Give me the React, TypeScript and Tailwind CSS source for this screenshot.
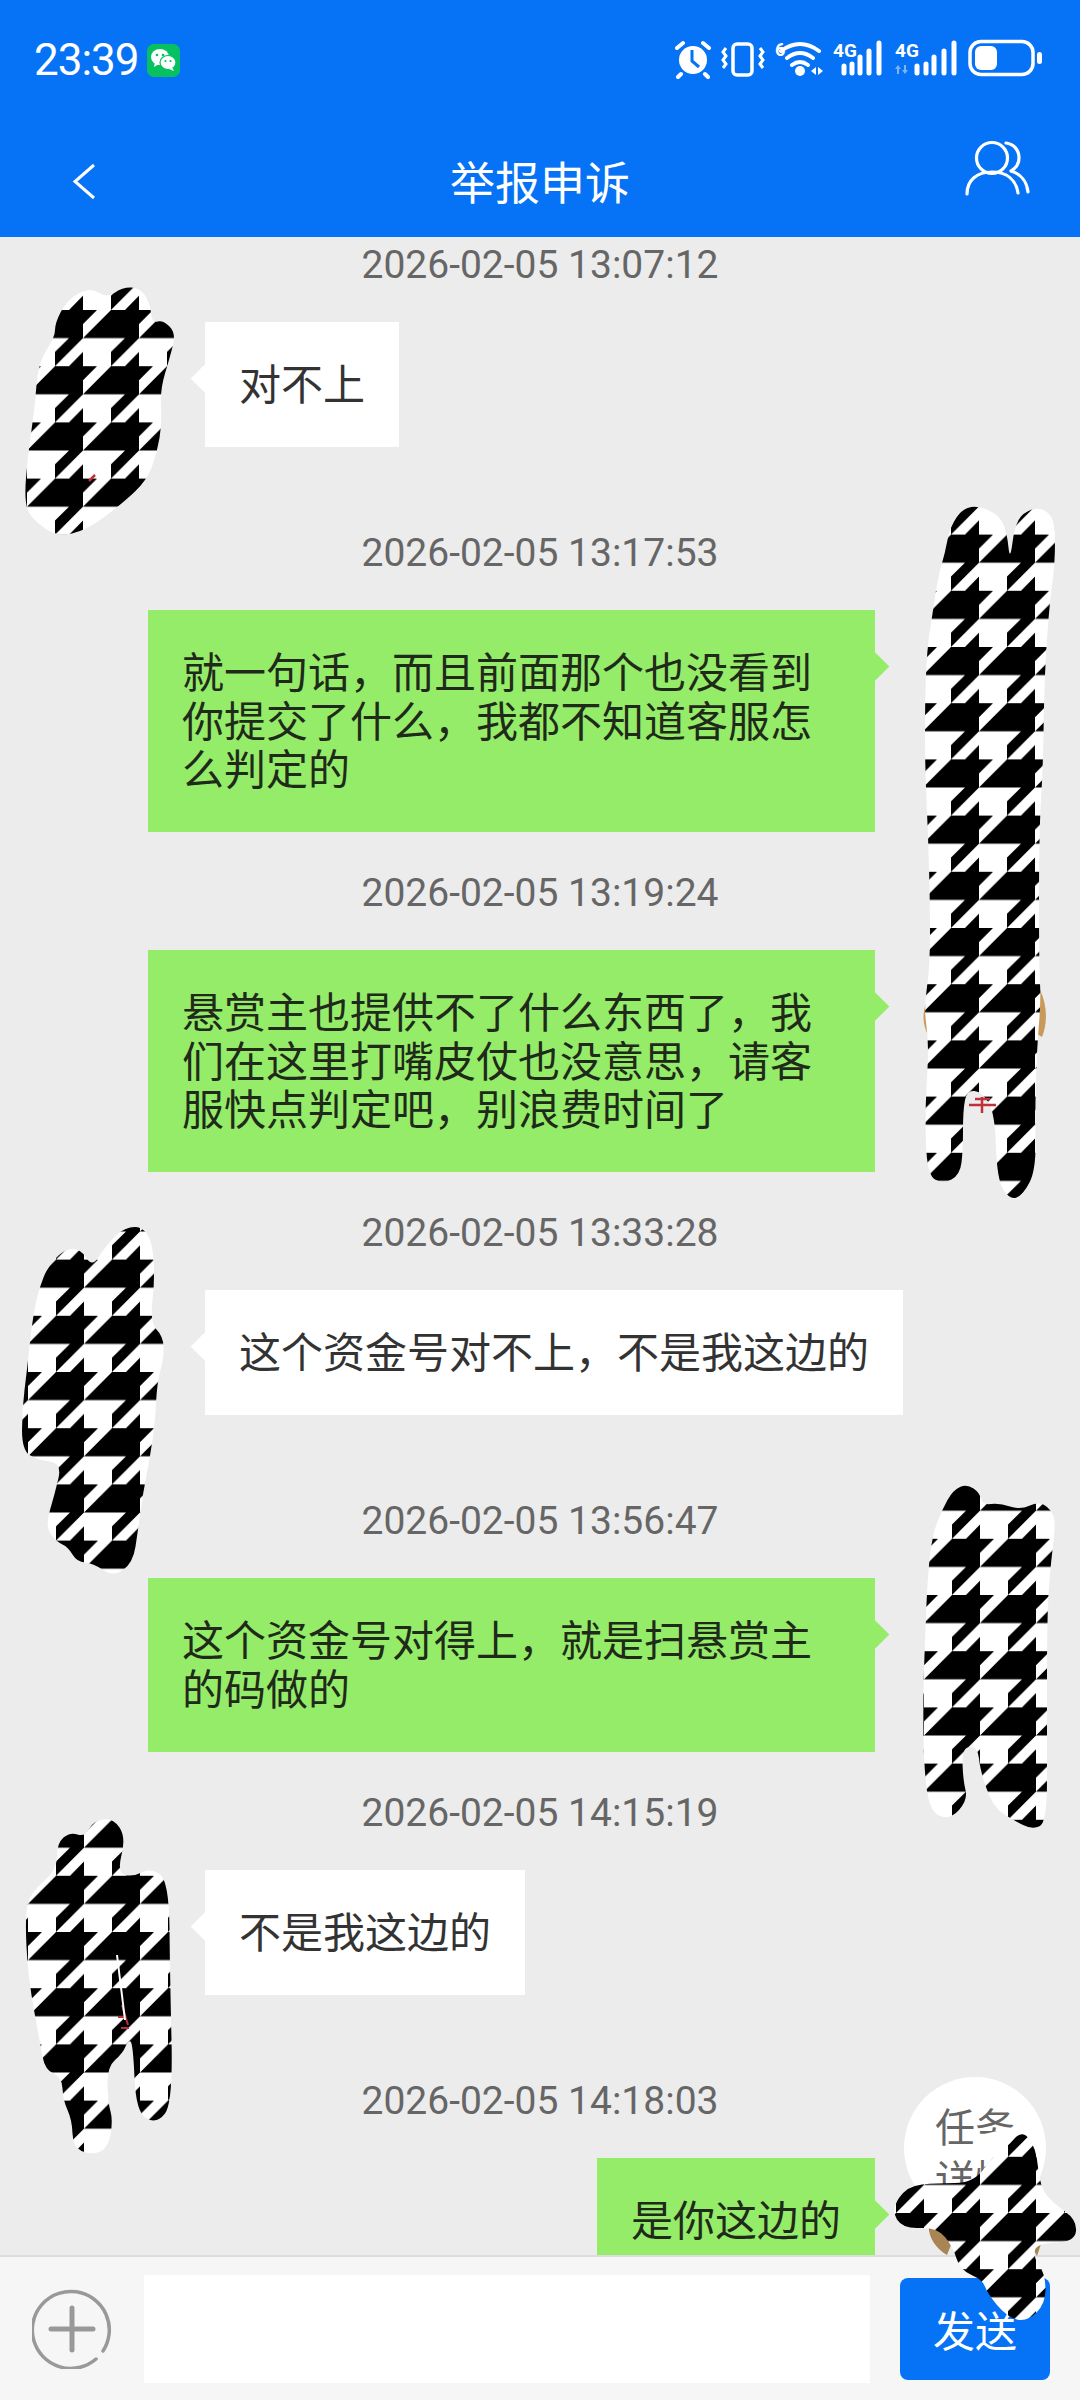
const cjk = "font-['Noto_Sans_CJK_SC','Noto_Sans',sans-serif]";

type Msg = { time: string; text: string; me: boolean };

const messages: Msg[] = [
  { time: "2026-02-05 13:07:12", text: "对不上", me: false },
  { time: "2026-02-05 13:17:53", text: "就一句话，而且前面那个也没看到你提交了什么，我都不知道客服怎么判定的", me: true },
  { time: "2026-02-05 13:19:24", text: "悬赏主也提供不了什么东西了，我们在这里打嘴皮仗也没意思，请客服快点判定吧，别浪费时间了", me: true },
  { time: "2026-02-05 13:33:28", text: "这个资金号对不上，不是我这边的", me: false },
  { time: "2026-02-05 13:56:47", text: "这个资金号对得上，就是扫悬赏主的码做的", me: true },
  { time: "2026-02-05 14:15:19", text: "不是我这边的", me: false },
  { time: "2026-02-05 14:18:03", text: "是你这边的", me: true },
];

// redaction scribbles over the avatars: outline points + where the check pattern starts
const blobs: { id: string; x: number; y: number; pts: number[][] }[] = [
  {
    id: "a", x: 55, y: 310,
    pts: [[55,323],[67,300],[90,287],[107,298],[123,287],[140,288],[150,303],[152,323],[163,320],[176,333],[170,357],[160,390],[162,423],[157,453],[147,480],[123,503],[87,530],[57,537],[33,520],[24,503],[28,453],[35,407],[38,363],[55,337]],
  },
  {
    id: "b", x: 951, y: 647,
    pts: [[950,527],[963,508],[980,506],[1000,516],[1007,533],[1010,562],[1015,523],[1027,510],[1043,508],[1055,520],[1055,563],[1050,600],[1046,650],[1044,700],[1043,767],[1039,833],[1039,967],[1041,1000],[1037,1047],[1035,1113],[1036,1170],[1023,1195],[1010,1200],[997,1180],[995,1113],[982,1092],[967,1090],[963,1110],[963,1150],[960,1175],[943,1184],[927,1175],[925,1113],[928,1063],[928,1037],[924,1007],[930,967],[930,900],[928,833],[925,767],[925,700],[927,650],[932,617],[938,577],[945,553]],
  },
  {
    id: "c", x: 56, y: 1372,
    pts: [[40,1287],[47,1268],[63,1250],[80,1248],[92,1267],[103,1250],[120,1230],[140,1225],[152,1240],[155,1277],[150,1323],[163,1336],[164,1357],[157,1383],[155,1423],[150,1457],[143,1493],[138,1530],[133,1563],[113,1577],[93,1563],[77,1562],[68,1547],[57,1542],[45,1527],[55,1493],[62,1463],[37,1460],[22,1450],[22,1410],[27,1370],[32,1323],[37,1297]],
  },
  {
    id: "d", x: 952, y: 1595,
    pts: [[942,1510],[953,1490],[967,1484],[980,1493],[982,1505],[1000,1503],[1020,1510],[1040,1501],[1054,1513],[1055,1530],[1050,1570],[1047,1620],[1047,1737],[1047,1822],[1033,1830],[1013,1820],[993,1807],[980,1770],[978,1747],[962,1747],[963,1780],[968,1800],[950,1820],[930,1812],[924,1770],[923,1703],[925,1637],[928,1570],[933,1533]],
  },
  {
    id: "e", x: 56, y: 1932,
    pts: [[57,1843],[70,1832],[85,1837],[93,1821],[113,1818],[126,1837],[117,1873],[133,1877],[150,1868],[169,1880],[170,1977],[173,2103],[157,2124],[136,2113],[133,2043],[128,2040],[123,2053],[107,2067],[108,2103],[113,2120],[108,2149],[90,2155],[73,2147],[72,2120],[63,2100],[62,2077],[45,2070],[40,2043],[28,1977],[25,1917],[30,1893],[57,1870]],
  },
  {
    id: "f", x: 952, y: 2213,
    pts: [[1007,2147],[1022,2130],[1036,2147],[1040,2187],[1053,2203],[1077,2220],[1075,2242],[1037,2243],[1033,2257],[1045,2273],[1046,2303],[1027,2322],[1007,2317],[987,2293],[983,2280],[960,2270],[953,2247],[937,2227],[903,2229],[891,2210],[907,2186],[937,2183],[973,2183],[993,2157]],
  },
];

function smooth(pts: number[][]) {
  const mid = (a: number[], b: number[]) => `${(a[0] + b[0]) / 2} ${(a[1] + b[1]) / 2}`;
  let d = `M${mid(pts[pts.length - 1], pts[0])}`;
  pts.forEach((p, i) => {
    d += ` Q${p[0]} ${p[1]} ${mid(p, pts[(i + 1) % pts.length])}`;
  });
  return d + "Z";
}

function Scribbles() {
  return (
    <svg className="absolute left-0 top-0 pointer-events-none" width="1080" height="2400" viewBox="0 0 1080 2400">
      <defs>
        {blobs.map((b) => (
          <pattern key={b.id} id={`check-${b.id}`} patternUnits="userSpaceOnUse" x={b.x} y={b.y} width="56" height="56.2">
            <rect width="56" height="56.2" fill="#fff" />
            <path d="M0 0H28V28H0ZM14 56.2H28V42ZM28 0H42L28 14ZM56 0V28H28ZM14 28H28L0 56.2V42Z" fill="#000" />
          </pattern>
        ))}
      </defs>
      {/* bits of the avatars that show round the edges */}
      <path d="M926 1003c-4 12-3 22 2 32l5-2-2-30ZM1040 990c7 14 8 32 2 47l-5-3 1-44Z" fill="#c79a5a" />
      <path d="M929 2222c-2 14 6 26 18 33l8-20-12-18ZM1025 2234l12 22 6-18-8-8Z" fill="#a98454" />
      {/* white stroke that cuts the floating button's first line */}
      <path d="M976 2136L1018 2126 1030 2154H976Z" fill="#fff" />
      {blobs.map((b) => (
        <path key={b.id} d={smooth(b.pts)} fill={`url(#check-${b.id})`} />
      ))}
      <path d="M969 1105H996M982 1097V1113M975 1099H990M89 481l6-6" stroke="#c0303a" strokeWidth="2.5" fill="none" />
      <path d="M122 2005l6 20M118 2017h8M121 2028h8" stroke="#b5303a" strokeWidth="2" fill="none" />
      <path d="M117 1955l8 65" stroke="#fff" strokeWidth="2" fill="none" />
    </svg>
  );
}

function StatusIcons() {
  return (
    <svg width="372" height="40" viewBox="0 0 372 40" fill="none">
      {/* alarm */}
      <circle cx="21" cy="21" r="14" fill="#fff" />
      <path d="M20 11v11l7 6" stroke="#0672f5" strokeWidth="3" />
      <path d="M5 9l6-5M37 9l-6-5M9 35l-3 3M33 35l3 3" stroke="#fff" strokeWidth="4" strokeLinecap="round" />
      {/* vibrate */}
      <rect x="61" y="5" width="19" height="31" rx="4" stroke="#fff" strokeWidth="3.5" />
      <path d="M54 9l-3 4 3 4-3 4 3 4-3 4M88 9l3 4-3 4 3 4-3 4 3 4" stroke="#fff" strokeWidth="3" />
      {/* wifi */}
      <text x="103" y="17" fill="#fff" fontSize="18" fontWeight="700" fontFamily="Roboto, sans-serif">6</text>
      <path d="M109 12Q128-2 147 12M115 19Q128 9 141 19M120 26Q128 20 136 26" stroke="#fff" strokeWidth="4" strokeLinecap="round" />
      <circle cx="128" cy="32" r="5" fill="#fff" />
      <path d="M144 28v8l-5-4ZM146 28v8l5-4Z" fill="#fff" />
      {/* sim 1 */}
      <text x="161" y="18" fill="#fff" fontSize="19" fontWeight="700" fontFamily="Roboto, sans-serif">4G</text>
      <path d="M172 27v7M180 25v9M188 18v16M197 12v22M207 4v30" stroke="#fff" strokeWidth="5" strokeLinecap="round" />
      {/* sim 2 */}
      <text x="223" y="18" fill="#fff" fontSize="19" fontWeight="700" fontFamily="Roboto, sans-serif">4G</text>
      <path d="M226 26l-3 4h2v5h2v-5h2ZM233 35l3-4h-2v-5h-2v5h-2Z" fill="#7db4fa" />
      <path d="M245 27v7M254 25v9M262 18v16M272 12v22M282 4v30" stroke="#fff" strokeWidth="5" strokeLinecap="round" />
      {/* battery */}
      <rect x="298" y="2.5" width="63" height="33" rx="11" stroke="#fff" strokeWidth="3.5" />
      <rect x="303" y="7" width="22" height="24" rx="6" fill="#fff" />
      <rect x="365" y="13" width="5" height="12" rx="2.5" fill="#fff" />
    </svg>
  );
}

function WechatBadge() {
  return (
    <div className="w-[33px] h-[33px] rounded-[7px] bg-[#07c160] flex items-center justify-center">
      <svg width="27" height="24" viewBox="0 0 27 24" fill="#fff">
        <ellipse cx="10" cy="9" rx="9" ry="8" />
        <path d="M5 14l-1 5 5-3Z" />
        <ellipse cx="18" cy="14.5" rx="8" ry="7" stroke="#07c160" strokeWidth="1.2" />
        <path d="M22 19l2 4-5-2Z" />
        <circle cx="7" cy="7" r="1.3" fill="#07c160" />
        <circle cx="13" cy="7" r="1.3" fill="#07c160" />
        <circle cx="15.5" cy="13" r="1.1" fill="#07c160" />
        <circle cx="20.5" cy="13" r="1.1" fill="#07c160" />
      </svg>
    </div>
  );
}

function Bubble({ msg }: { msg: Msg }) {
  const colour = msg.me ? "bg-[#95ec69] text-[#1f2a1a]" : "bg-white text-[#333333]";
  return (
    <div className={`flex min-h-[170px] items-start ${msg.me ? "justify-end pr-[205px]" : "justify-start pl-[205px]"}`}>
      <div className={`relative max-w-[727px] px-[34px] pt-[36px] pb-[40.5px] text-[42px] leading-[48.5px] ${colour}`}>
        <span className={`absolute top-[46px] w-[21px] h-[21px] rotate-45 ${msg.me ? "-right-[10px] bg-[#95ec69]" : "-left-[10px] bg-white"}`} />
        <p className="relative">{msg.text}</p>
      </div>
    </div>
  );
}

export default function App() {
  return (
    <div className={`relative flex flex-col w-[1080px] h-[2400px] overflow-hidden bg-[#ececec] ${cjk}`}>
      <header className="h-[237px] bg-[#0672f5] text-white shrink-0">
        <div className="flex h-[125px] items-start justify-between pl-[34px] pr-[36px] pt-[39px]">
          <div className="flex items-center gap-[8px]">
            <span className="font-['Roboto',sans-serif] text-[44px] leading-[42px] tracking-[-1px]">23:39</span>
            <WechatBadge />
          </div>
          <StatusIcons />
        </div>
        <div className="grid grid-cols-[1fr_auto_1fr] items-center h-[112px]">
          <div className="pl-[72px]">
            <svg width="24" height="37" viewBox="0 0 24 37" fill="none">
              <path d="M22 2L3 18.5 22 35" stroke="#fff" strokeWidth="3" />
            </svg>
          </div>
          <div className="text-[45px] leading-[56px]">举报申诉</div>
          <div className="flex justify-end pr-[50px] -mt-[26px]">
            <svg width="66" height="56" viewBox="0 0 66 56" fill="none" stroke="#fff" strokeWidth="3.2" strokeLinecap="round">
              <circle cx="28" cy="18" r="15.5" />
              <path d="M3 54c0-14 10-22 25-22s24 8 26 21M42 3c8 1 13 7 13 15 0 6-3 10-8 13M47 31c10 3 16 11 17 21" />
            </svg>
          </div>
        </div>
      </header>

      <main className="flex-1 overflow-hidden">
        <div className="-mt-[33px]">
          {messages.map((m) => (
            <section key={m.time}>
              <div className="flex h-[118px] items-center justify-center pt-[5px] font-['Roboto',sans-serif] text-[39px] text-[#666666]">
                {m.time}
              </div>
              <Bubble msg={m} />
            </section>
          ))}
        </div>
      </main>

      <footer className="flex h-[145px] shrink-0 items-center border-t-2 border-[#dcdcdc] bg-[#f6f6f6] pl-[32px] pr-[30px]">
        <svg width="80" height="80" viewBox="0 0 80 80" fill="none" stroke="#999999" strokeWidth="3.5" strokeLinecap="round">
          <path d="M71 62A38.5 38.5 0 1 0 64 70" />
          <path d="M40 19V61M19 40H61" strokeWidth="5" />
        </svg>
        <div className="ml-[32px] h-[108px] w-[726px] bg-white" />
        <button className="ml-[30px] h-[102px] w-[150px] rounded-[8px] bg-[#0672f5] text-[42px] text-white">发送</button>
      </footer>

      <div className="absolute left-[904px] top-[2077px] flex h-[142px] w-[142px] items-center justify-center rounded-full bg-white pt-[6px] text-center text-[40px] leading-[52px] text-[#666666]">
        <p className="w-[84px]">任务详情</p>
      </div>

      <Scribbles />
    </div>
  );
}
